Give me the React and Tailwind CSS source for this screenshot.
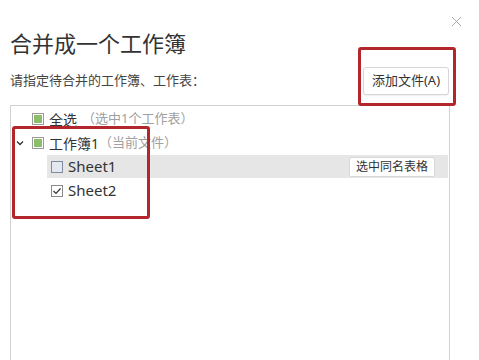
import { X } from 'lucide-react'

function Box({ type }) {
  if (type === 'partial') {
    return (
      <span className="w-[12px] h-[12px] border border-[#9a9a9a] bg-white flex items-center justify-center shrink-0">
        <span className="w-[8px] h-[8px] bg-[#8bbd6b]" />
      </span>
    )
  }
  if (type === 'checked') {
    return (
      <span className="w-[12px] h-[12px] border border-[#8a8a8a] bg-white flex items-center justify-center shrink-0">
        <svg width="10" height="10" viewBox="0 0 10 10">
          <polyline points="1.5,5 4,7.5 8.5,2.5" fill="none" stroke="#333" strokeWidth="1.2" />
        </svg>
      </span>
    )
  }
  return <span className="w-[12px] h-[12px] border border-[#7f8aa0] bg-[#e4e8f0] shrink-0" />
}

export default function App() {
  return (
    <div className="relative w-[479px] h-[360px] overflow-hidden bg-white font-['Noto_Sans','Noto_Sans_CJK_SC',sans-serif] text-[#333]">
      {/* close */}
      <button className="absolute top-[13px] right-[14px] text-[#9a9a9a]">
        <X size={17} strokeWidth={1.2} />
      </button>

      <div className="flex flex-col h-full pl-[10px] pr-[29px]">
        <h1 className="pt-[28px] text-[22px] leading-[30px] text-[#333]">合并成一个工作簿</h1>

        <div className="mt-[9px] flex items-center justify-between">
          <span className="text-[13px] text-[#444]">请指定待合并的工作簿、工作表：</span>
          <button className="mr-[1px] h-[28px] w-[86px] rounded-[3px] border border-[#d6d6d6] bg-white text-[13px] text-[#333] shadow-[0_1px_1px_rgba(0,0,0,0.06)]">
            添加文件(A)
          </button>
        </div>

        {/* tree panel */}
        <div className="mt-[10px] flex-1 border border-b-0 border-[#d2d2d2] pt-[1px] pr-[1px] text-[14px]">
          <div className="h-[24px] flex items-center pl-[21px] gap-[5px]">
            <Box type="partial" />
            <span>全选</span>
            <span className="text-[#a0a0a0] text-[13px]">（选中1个工作表）</span>
          </div>

          <div className="h-[24px] flex items-center pl-[4px]">
            <svg width="10" height="10" viewBox="0 0 10 10" className="mr-[7px]">
              <polyline points="2,3.5 5,6.5 8,3.5" fill="none" stroke="#333" strokeWidth="1.3" />
            </svg>
            <Box type="partial" />
            <span className="ml-[5px]">工作簿1</span>
            <span className="text-[#a0a0a0] text-[13px]">（当前文件）</span>
          </div>

          <div className="ml-[36px] h-[23px] flex items-center pl-[4px] pr-[13px] bg-[#e6e6e6]">
            <Box type="empty" />
            <span className="ml-[5px] text-[15px]">Sheet1</span>
            <button className="ml-auto h-[20px] px-[6px] rounded-[2px] border border-[#d8d8d8] bg-white text-[12px] text-[#333]">
              选中同名表格
            </button>
          </div>

          <div className="ml-[36px] h-[25px] flex items-center pl-[4px]">
            <Box type="checked" />
            <span className="ml-[5px] text-[15px]">Sheet2</span>
          </div>
        </div>
      </div>

      {/* annotation highlights */}
      <div className="absolute left-[358px] top-[47px] w-[98px] h-[59px] border-[3px] border-[#b3262b] rounded-[3px]" />
      <div className="absolute left-[12px] top-[126px] w-[138px] h-[93px] border-[3px] border-[#b3262b] rounded-[3px]" />
    </div>
  )
}
